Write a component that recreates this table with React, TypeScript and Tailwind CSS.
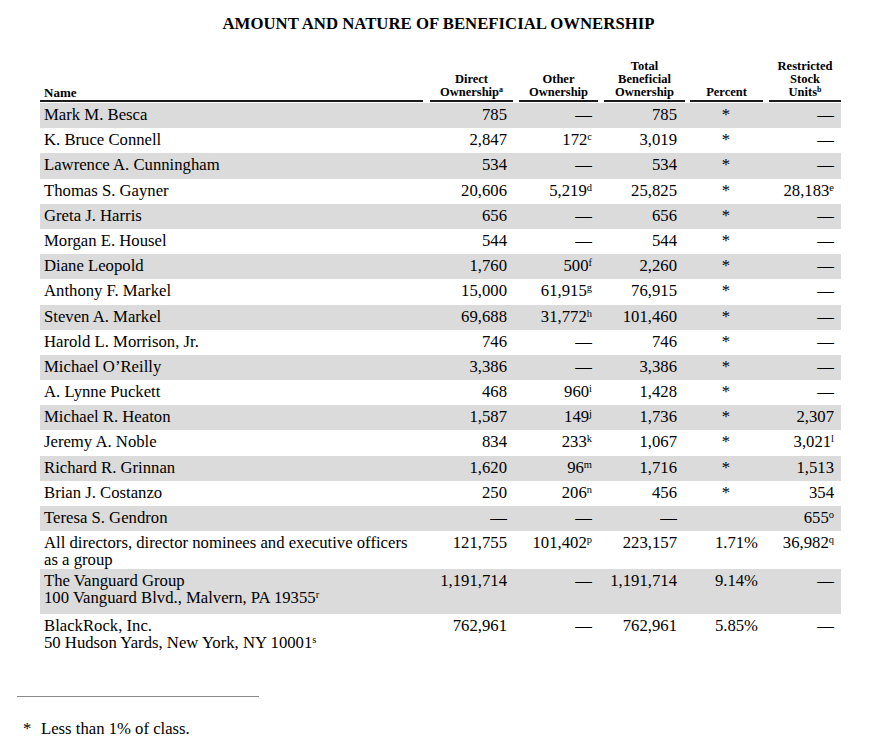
type Row = {
  name: string[];
  direct: Cell;
  other: Cell;
  total: Cell;
  percent: string;
  rsu: Cell;
  h: string;
};

type Cell = { v: string; note?: string };

const D: Cell = { v: "—" };
const c = (v: string, note?: string): Cell => ({ v, note });

const rows: Row[] = [
  { name: ["Mark M. Besca"], direct: c("785"), other: D, total: c("785"), percent: "*", rsu: D, h: "h-[25.2px]" },
  { name: ["K. Bruce Connell"], direct: c("2,847"), other: c("172", "c"), total: c("3,019"), percent: "*", rsu: D, h: "h-[25.2px]" },
  { name: ["Lawrence A. Cunningham"], direct: c("534"), other: D, total: c("534"), percent: "*", rsu: D, h: "h-[25.2px]" },
  { name: ["Thomas S. Gayner"], direct: c("20,606"), other: c("5,219", "d"), total: c("25,825"), percent: "*", rsu: c("28,183", "e"), h: "h-[25.2px]" },
  { name: ["Greta J. Harris"], direct: c("656"), other: D, total: c("656"), percent: "*", rsu: D, h: "h-[25.2px]" },
  { name: ["Morgan E. Housel"], direct: c("544"), other: D, total: c("544"), percent: "*", rsu: D, h: "h-[25.2px]" },
  { name: ["Diane Leopold"], direct: c("1,760"), other: c("500", "f"), total: c("2,260"), percent: "*", rsu: D, h: "h-[25.2px]" },
  { name: ["Anthony F. Markel"], direct: c("15,000"), other: c("61,915", "g"), total: c("76,915"), percent: "*", rsu: D, h: "h-[25.2px]" },
  { name: ["Steven A. Markel"], direct: c("69,688"), other: c("31,772", "h"), total: c("101,460"), percent: "*", rsu: D, h: "h-[25.2px]" },
  { name: ["Harold L. Morrison, Jr."], direct: c("746"), other: D, total: c("746"), percent: "*", rsu: D, h: "h-[25.2px]" },
  { name: ["Michael O’Reilly"], direct: c("3,386"), other: D, total: c("3,386"), percent: "*", rsu: D, h: "h-[25.2px]" },
  { name: ["A. Lynne Puckett"], direct: c("468"), other: c("960", "i"), total: c("1,428"), percent: "*", rsu: D, h: "h-[25.2px]" },
  { name: ["Michael R. Heaton"], direct: c("1,587"), other: c("149", "j"), total: c("1,736"), percent: "*", rsu: c("2,307"), h: "h-[25.2px]" },
  { name: ["Jeremy A. Noble"], direct: c("834"), other: c("233", "k"), total: c("1,067"), percent: "*", rsu: c("3,021", "l"), h: "h-[25.2px]" },
  { name: ["Richard R. Grinnan"], direct: c("1,620"), other: c("96", "m"), total: c("1,716"), percent: "*", rsu: c("1,513"), h: "h-[25.2px]" },
  { name: ["Brian J. Costanzo"], direct: c("250"), other: c("206", "n"), total: c("456"), percent: "*", rsu: c("354"), h: "h-[25.2px]" },
  { name: ["Teresa S. Gendron"], direct: D, other: D, total: D, percent: "", rsu: c("655", "o"), h: "h-[25.2px]" },
  {
    name: ["All directors, director nominees and executive officers", "as a group"],
    direct: c("121,755"),
    other: c("101,402", "p"),
    total: c("223,157"),
    percent: "1.71%",
    rsu: c("36,982", "q"),
    h: "h-[37.6px]",
  },
  {
    name: ["The Vanguard Group", "100 Vanguard Blvd., Malvern, PA 19355|r"],
    direct: c("1,191,714"),
    other: D,
    total: c("1,191,714"),
    percent: "9.14%",
    rsu: D,
    h: "h-[45px]",
  },
  {
    name: ["BlackRock, Inc.", "50 Hudson Yards, New York, NY 10001|s"],
    direct: c("762,961"),
    other: D,
    total: c("762,961"),
    percent: "5.85%",
    rsu: D,
    h: "h-[45px]",
  },
];

const cols = "grid grid-cols-[383px_90px_85px_87px_78px_78px]";

const Sup = ({ t }: { t: string }) => (
  <span className="relative -top-[5px] text-[10.5px] leading-none">{t}</span>
);

const Num = ({ cell }: { cell: Cell }) => (
  <>
    {cell.v}
    {cell.note && <Sup t={cell.note} />}
  </>
);

const NameLine = ({ text }: { text: string }) => {
  const [main, note] = text.split("|");
  return (
    <div>
      {main}
      {note && <Sup t={note} />}
    </div>
  );
};

const HeadCell = ({ lines, note, className }: { lines: string[]; note?: string; className: string }) => (
  <div className={`flex flex-col justify-end border-b-2 border-[#1c1c1c] pb-px text-center ${className}`}>
    {lines.map((l, i) => (
      <div key={i}>
        {l}
        {note && i === lines.length - 1 && (
          <span className="relative -top-[4px] text-[8px] leading-none">{note}</span>
        )}
      </div>
    ))}
  </div>
);

export default function App() {
  return (
    <div className="h-[750px] w-[877px] bg-white font-['Liberation_Serif',serif] text-black">
      <h1 className="pt-[14px] text-center text-[16.75px] font-bold leading-[20px]">
        AMOUNT AND NATURE OF BENEFICIAL OWNERSHIP
      </h1>

      <div className="mt-[26px] ml-[40px] w-[801px]">
        {/* header */}
        <div className={`${cols} text-[12.5px] font-bold leading-[13px]`}>
          <div className="flex flex-col justify-end border-b-2 border-[#1c1c1c] pb-px pl-[4px] text-[13px]">Name</div>
          <HeadCell className="ml-[7px]" lines={["Direct", "Ownership"]} note="a" />
          <HeadCell className="ml-[6px]" lines={["Other", "Ownership"]} />
          <HeadCell className="ml-[6px]" lines={["Total", "Beneficial", "Ownership"]} />
          <HeadCell className="ml-[5px]" lines={["Percent"]} />
          <HeadCell className="ml-[6px]" lines={["Restricted", "Stock", "Units"]} note="b" />
        </div>

        {/* body */}
        <div className="mt-px text-[16.7px] leading-[17px]">
          {rows.map((r, i) => (
            <div key={i} className={`${cols} ${r.h} pt-[3px] ${i % 2 === 0 ? "bg-[#dbdbdb]" : "bg-white"}`}>
              <div className="pl-[4px]">
                {r.name.map((n, j) => (
                  <NameLine key={j} text={n} />
                ))}
              </div>
              <div className="pr-[6px] text-right">
                <Num cell={r.direct} />
              </div>
              <div className="pr-[6px] text-right">
                <Num cell={r.other} />
              </div>
              <div className="pr-[8px] text-right">
                <Num cell={r.total} />
              </div>
              {r.percent === "*" ? (
                <div className="pl-[4px] text-center">*</div>
              ) : (
                <div className="pr-[5px] text-right">{r.percent}</div>
              )}
              <div className="pr-[7px] text-right">
                <Num cell={r.rsu} />
              </div>
            </div>
          ))}
        </div>
      </div>

      {/* footnote */}
      <div className="mt-[37px] ml-[17px] w-[242px] border-t border-[#8a8a8a]" />
      <div className="mt-[22px] ml-[23px] flex text-[16.7px] leading-[20px]">
        <span className="w-[18px]">*</span>
        <span>Less than 1% of class.</span>
      </div>
    </div>
  );
}
